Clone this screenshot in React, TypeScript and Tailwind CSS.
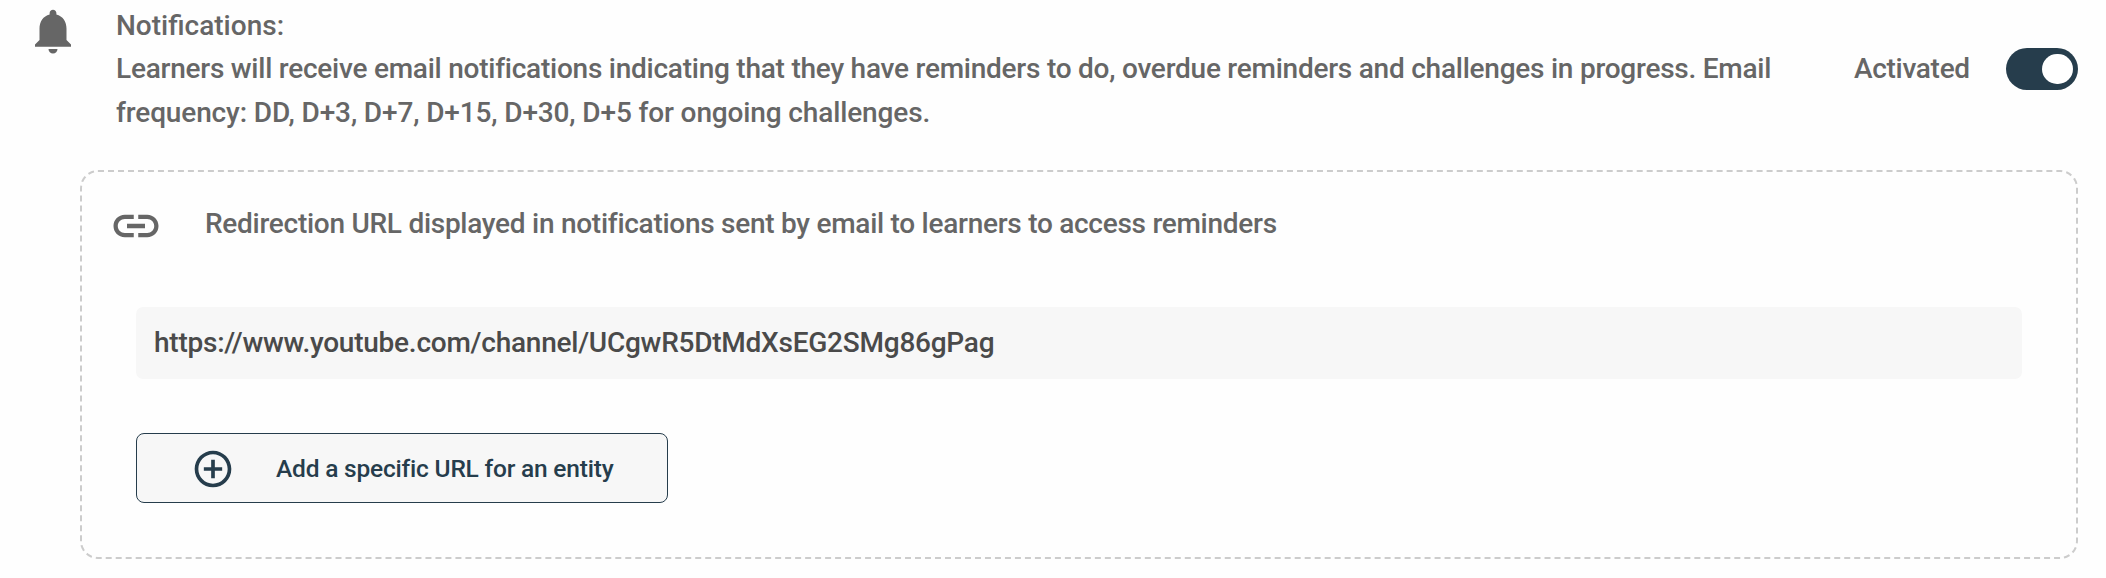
import { useState } from 'react'
import { MdAddCircleOutline, MdLink, MdNotifications } from 'react-icons/md'

function Toggle({ checked, onChange }: { checked: boolean; onChange: () => void }) {
  return (
    <button
      role="switch"
      aria-checked={checked}
      onClick={onChange}
      className={`flex h-[42px] w-[72px] shrink-0 items-center rounded-full px-[5px] ${
        checked ? 'justify-end bg-[#263d4c]' : 'justify-start bg-gray-400'
      }`}
    >
      <span className="h-[30px] w-[31px] rounded-full bg-white" />
    </button>
  )
}

export default function App() {
  const [activated, setActivated] = useState(true)

  return (
    <div className="h-[578px] w-[2106px] overflow-hidden bg-[#fefefe] font-['Roboto',sans-serif] text-[28px] leading-[43.5px] font-medium text-[#666]">
      <div className="flex pl-[26px]">
        <MdNotifications className="mt-1 size-[54px] shrink-0" />
        <div className="ml-9 w-[1738px] pt-[3.5px] whitespace-nowrap">
          <p>Notifications:</p>
          <p className="tracking-[-0.24px]">
            Learners will receive email notifications indicating that they have reminders to do, overdue reminders and challenges in progress. Email
          </p>
          <p className="tracking-[-0.13px]">
            frequency: DD, D+3, D+7, D+15, D+30, D+5 for ongoing challenges.
          </p>
        </div>
        <div className="flex h-[138px] items-center">
          <span className="w-[152px] tracking-[-0.3px]">Activated</span>
          <Toggle checked={activated} onChange={() => setActivated(!activated)} />
        </div>
      </div>

      <div className="mt-8 ml-20 h-[389px] w-[1998px] rounded-[18px] border-2 border-dashed border-[#ccc] pt-[27px]">
        <div className="flex pl-[27px]">
          <MdLink className="size-[54px] shrink-0" />
          <p className="ml-[42px] pt-[3px] tracking-[-0.27px] whitespace-nowrap">
            Redirection URL displayed in notifications sent by email to learners to access reminders
          </p>
        </div>

        <div className="mt-[54px] ml-[54px] flex h-[72px] w-[1886px] items-center rounded-[7px] bg-[#f7f7f7] pl-[18px] tracking-[-0.24px] text-[#4a4a4a]">
          https://www.youtube.com/channel/UCgwR5DtMdXsEG2SMg86gPag
        </div>

        <button className="mt-[54px] ml-[54px] flex h-[70px] w-[532px] items-center rounded-lg border border-[#263d4c] bg-[#f7f7f7] pl-[54px] text-[24.5px] text-[#263d4c]">
          <MdAddCircleOutline className="mt-0.5 size-11 shrink-0" />
          <span className="ml-[41px] pt-px tracking-[-0.2px] whitespace-nowrap">Add a specific URL for an entity</span>
        </button>
      </div>
    </div>
  )
}
